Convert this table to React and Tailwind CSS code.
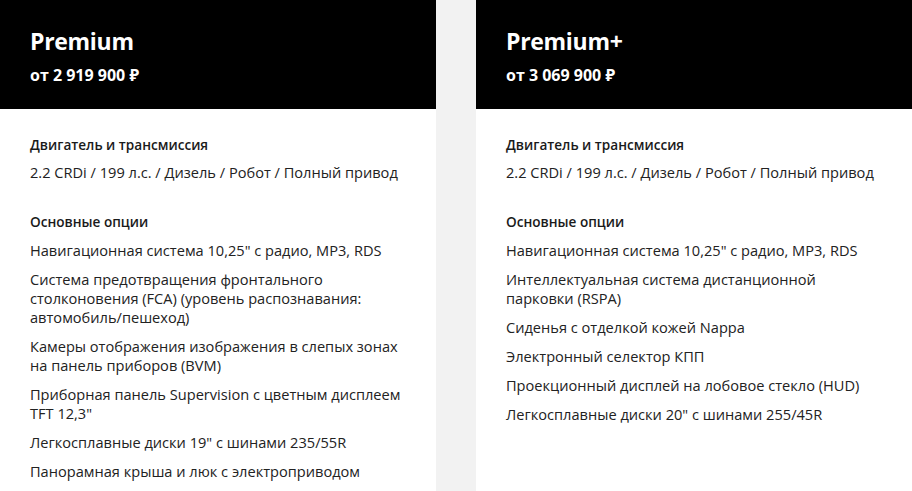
import React from "react";

const cards = [
  {
    title: "Premium",
    price: "от 2 919 900 ₽",
    engine: "2.2 CRDi / 199 л.с. / Дизель / Робот / Полный привод",
    options: [
      ["Навигационная система 10,25\" с радио, MP3, RDS"],
      ["Система предотвращения фронтального", "столконовения (FCA) (уровень распознавания:", "автомобиль/пешеход)"],
      ["Камеры отображения изображения в слепых зонах", "на панель приборов (BVM)"],
      ["Приборная панель Supervision с цветным дисплеем", "TFT 12,3\""],
      ["Легкосплавные диски 19\" с шинами 235/55R"],
      ["Панорамная крыша и люк с электроприводом"],
    ],
  },
  {
    title: "Premium+",
    price: "от 3 069 900 ₽",
    engine: "2.2 CRDi / 199 л.с. / Дизель / Робот / Полный привод",
    options: [
      ["Навигационная система 10,25\" с радио, MP3, RDS"],
      ["Интеллектуальная система дистанционной", "парковки (RSPA)"],
      ["Сиденья с отделкой кожей Nappa"],
      ["Электронный селектор КПП"],
      ["Проекционный дисплей на лобовое стекло (HUD)"],
      ["Легкосплавные диски 20\" с шинами 255/45R"],
    ],
  },
];

function Card({ c }) {
  return (
    <div className="w-[436px] shrink-0 bg-white">
      <div className="h-[109px] bg-black px-[30px] pt-[26px] text-white">
        <div className="text-[23px] font-bold leading-[30px] tracking-[-0.3px]">{c.title}</div>
        <div className="mt-[8px] text-[16px] font-bold leading-[22px]">{c.price}</div>
      </div>
      <div className="px-[30px] pt-[26px] pb-[10px] text-[#1a1a1a]">
        <div className="text-[13.6px] font-semibold leading-[19px]">Двигатель и трансмиссия</div>
        <div className="mt-[9px] whitespace-nowrap text-[14.6px] leading-[19px] text-[#222]">{c.engine}</div>
        <div className="mt-[30px] text-[13.6px] font-semibold leading-[19px]">Основные опции</div>
        <div className="mt-[10px] flex flex-col gap-[10px]">
          {c.options.map((o, i) => (
            <div key={i} className="flex flex-col text-[14.6px] leading-[19px] text-[#222]">
              {o.map((l, j) => (
                <span key={j} className="whitespace-nowrap">{l}</span>
              ))}
            </div>
          ))}
        </div>
      </div>
    </div>
  );
}

export default function App() {
  return (
    <div className="flex h-[491px] w-[912px] gap-[40px] overflow-hidden bg-[#f2f2f2]" style={{ fontFamily: '"Open Sans", "Noto Sans", sans-serif' }}>
      {cards.map((c, i) => (
        <Card key={i} c={c} />
      ))}
    </div>
  );
}
